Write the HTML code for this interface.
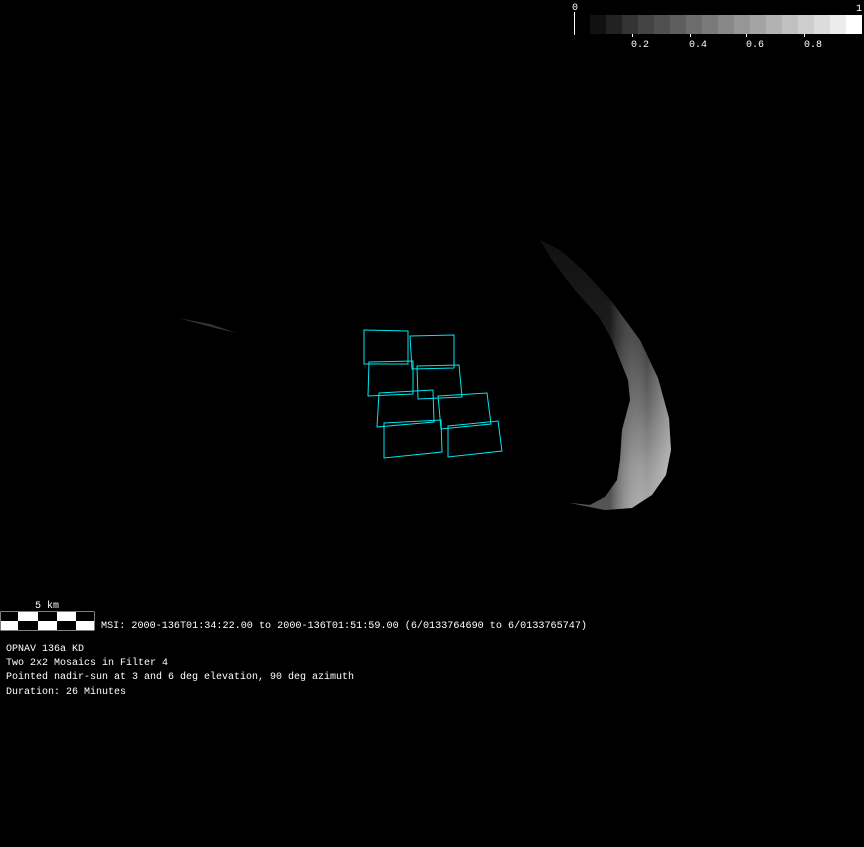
<!DOCTYPE html>
<html><head><style>
html,body{margin:0;padding:0;background:#000;width:864px;height:847px;overflow:hidden}
svg{position:absolute;left:0;top:0}
text{font-family:"Liberation Mono",monospace;font-size:10px;fill:#fff}
</style></head><body>
<svg width="864" height="847" viewBox="0 0 864 847">
<defs>
<linearGradient id="gy" gradientUnits="userSpaceOnUse" x1="0" y1="240" x2="0" y2="510">
<stop offset="0" stop-color="#222"/>
<stop offset="0.35" stop-color="#3a3a3a"/>
<stop offset="0.6" stop-color="#666"/>
<stop offset="0.85" stop-color="#999"/>
<stop offset="1" stop-color="#aaa"/>
</linearGradient>
<linearGradient id="gx" gradientUnits="userSpaceOnUse" x1="610" y1="0" x2="672" y2="0">
<stop offset="0" stop-color="#000" stop-opacity="0.5"/>
<stop offset="0.6" stop-color="#fff" stop-opacity="0"/>
<stop offset="1" stop-color="#fff" stop-opacity="0.35"/>
</linearGradient>
</defs>
<g>
<rect x="590" y="15" width="16" height="19" fill="#111"/>
<rect x="606" y="15" width="16" height="19" fill="#222"/>
<rect x="622" y="15" width="16" height="19" fill="#333"/>
<rect x="638" y="15" width="16" height="19" fill="#444"/>
<rect x="654" y="15" width="16" height="19" fill="#505050"/>
<rect x="670" y="15" width="16" height="19" fill="#5e5e5e"/>
<rect x="686" y="15" width="16" height="19" fill="#6c6c6c"/>
<rect x="702" y="15" width="16" height="19" fill="#7a7a7a"/>
<rect x="718" y="15" width="16" height="19" fill="#888"/>
<rect x="734" y="15" width="16" height="19" fill="#969696"/>
<rect x="750" y="15" width="16" height="19" fill="#a4a4a4"/>
<rect x="766" y="15" width="16" height="19" fill="#b2b2b2"/>
<rect x="782" y="15" width="16" height="19" fill="#c0c0c0"/>
<rect x="798" y="15" width="16" height="19" fill="#cecece"/>
<rect x="814" y="15" width="16" height="19" fill="#dcdcdc"/>
<rect x="830" y="15" width="16" height="19" fill="#ececec"/>
<rect x="846" y="15" width="16" height="19" fill="#fff"/>
<line x1="574.5" y1="12" x2="574.5" y2="35" stroke="#fff"/>
<line x1="632.5" y1="34" x2="632.5" y2="37" stroke="#fff"/>
<line x1="690.5" y1="34" x2="690.5" y2="37" stroke="#fff"/>
<line x1="746.5" y1="34" x2="746.5" y2="37" stroke="#fff"/>
<line x1="804.5" y1="34" x2="804.5" y2="37" stroke="#fff"/>
<text x="572" y="10">0</text>
<text x="856" y="11">1</text>
<text x="631" y="47">0.2</text>
<text x="689" y="47">0.4</text>
<text x="746" y="47">0.6</text>
<text x="804" y="47">0.8</text>
</g>
<path d="M178,318 L210,324 L237,333 L215,328 Z" fill="#333"/>
<path d="M540,240 L560,250 L585,272 L612,302 L640,340 L658,378 L669,418 L671,450 L666,475 L652,495 L632,508 L605,510 L570,503 L590,505 L605,497 L617,480 L620,460 L622,430 L630,400 L628,380 L612,340 L600,318 L575,290 L552,260 Z" fill="url(#gy)"/>
<path d="M540,240 L560,250 L585,272 L612,302 L640,340 L658,378 L669,418 L671,450 L666,475 L652,495 L632,508 L605,510 L570,503 L590,505 L605,497 L617,480 L620,460 L622,430 L630,400 L628,380 L612,340 L600,318 L575,290 L552,260 Z" fill="url(#gx)"/>
<g fill="none" stroke="#00e8f0" stroke-width="1">
<polygon points="364,330 408,331 408,364 364,364"/>
<polygon points="410,336 454,335 454,368 412,369"/>
<polygon points="369,362 413,361 413,394 368,396"/>
<polygon points="417,366 459,365 462,397 418,399"/>
<polygon points="379,393 433,390 434,422 377,427"/>
<polygon points="438,396 487,393 491,424 441,429"/>
<polygon points="384,423 441,420 442,452 384,458"/>
<polygon points="448,426 498,421 502,451 448,457"/>
</g>
<rect x="0.5" y="611.5" width="94" height="19" fill="#fff"/>
<rect x="1" y="612" width="17" height="9" fill="#000"/>
<rect x="38" y="612" width="19" height="9" fill="#000"/>
<rect x="76" y="612" width="18" height="9" fill="#000"/>
<rect x="18" y="621" width="20" height="9" fill="#000"/>
<rect x="57" y="621" width="19" height="9" fill="#000"/>
<text x="35" y="608" textLength="24">5 km</text>
<text x="101" y="628" textLength="486" lengthAdjust="spacingAndGlyphs">MSI:  2000-136T01:34:22.00 to 2000-136T01:51:59.00 (6/0133764690 to 6/0133765747)</text>
<text x="6" y="651" textLength="78" lengthAdjust="spacingAndGlyphs">OPNAV 136a KD</text>
<text x="6" y="665" textLength="162" lengthAdjust="spacingAndGlyphs">Two 2x2 Mosaics in Filter 4</text>
<text x="6" y="679" textLength="348" lengthAdjust="spacingAndGlyphs">Pointed nadir-sun at 3 and 6 deg elevation, 90 deg azimuth</text>
<text x="6" y="694" textLength="120" lengthAdjust="spacingAndGlyphs">Duration: 26 Minutes</text>
</svg>
</body></html>
